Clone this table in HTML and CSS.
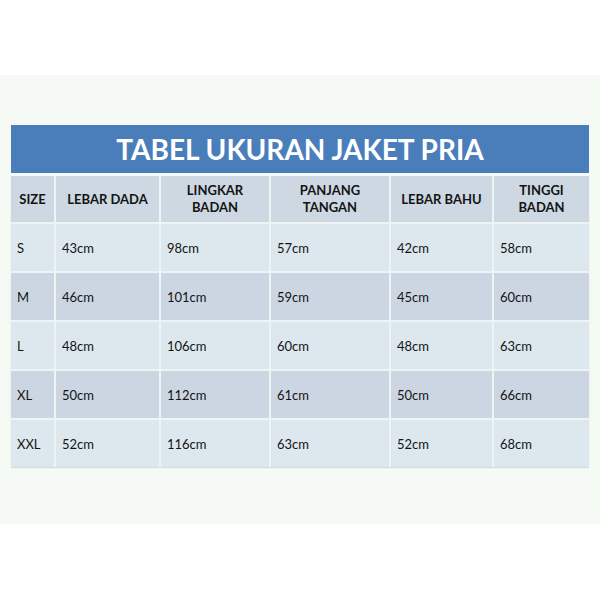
FILE: index.html
```html
<!DOCTYPE html>
<html>
<head>
<meta charset="utf-8">
<link rel="stylesheet" href="styles.css">
</head>
<body>
<div class="band">
  <div class="chart">
    <div class="title">TABEL UKURAN JAKET PRIA</div>
    <div class="grid">
      <div class="hd">SIZE</div>
      <div class="hd">LEBAR DADA</div>
      <div class="hd">LINGKAR<br>BADAN</div>
      <div class="hd">PANJANG<br>TANGAN</div>
      <div class="hd">LEBAR BAHU</div>
      <div class="hd">TINGGI<br>BADAN</div>

      <div class="c lt">S</div><div class="c lt">43cm</div><div class="c lt">98cm</div><div class="c lt">57cm</div><div class="c lt">42cm</div><div class="c lt">58cm</div>
      <div class="c dk">M</div><div class="c dk">46cm</div><div class="c dk">101cm</div><div class="c dk">59cm</div><div class="c dk">45cm</div><div class="c dk">60cm</div>
      <div class="c lt">L</div><div class="c lt">48cm</div><div class="c lt">106cm</div><div class="c lt">60cm</div><div class="c lt">48cm</div><div class="c lt">63cm</div>
      <div class="c dk">XL</div><div class="c dk">50cm</div><div class="c dk">112cm</div><div class="c dk">61cm</div><div class="c dk">50cm</div><div class="c dk">66cm</div>
      <div class="c lt">XXL</div><div class="c lt">52cm</div><div class="c lt">116cm</div><div class="c lt">63cm</div><div class="c lt">52cm</div><div class="c lt">68cm</div>
    </div>
  </div>
</div>
</body>
</html>
```
FILE: styles.css
```css
html, body {
  margin: 0;
  padding: 0;
  background: #ffffff;
}
body {
  padding-top: 75px;
  font-family: Lato, "Liberation Sans", sans-serif;
  color: #141414;
}
.band {
  background: #f6faf5;
  height: 449px;
  padding: 50px 11px 0 11px;
  box-sizing: border-box;
}
.chart {
  width: 578px;
}
.title {
  background: #4a7ebb;
  color: #ffffff;
  height: 48px;
  display: flex;
  align-items: center;
  justify-content: center;
  font-weight: 700;
  font-size: 28px;
}
.grid {
  margin-top: 3px;
  display: grid;
  grid-template-columns: 43px 103px 108px 118px 101px 95px;
  grid-template-rows: 46px repeat(5, 47px);
  gap: 2px;
  background: #eef4f4;
  box-shadow: 0 1px 1px rgba(150, 165, 175, 0.35);
}
.hd {
  background: #cdd8e2;
  display: flex;
  align-items: center;
  justify-content: center;
  text-align: center;
  font-weight: 700;
  font-size: 13px;
  line-height: 17px;
}
.c {
  display: flex;
  align-items: center;
  padding-left: 6px;
  font-size: 13px;
}
.lt { background: #dce8ee; }
.dk { background: #cbd6e2; }
```
